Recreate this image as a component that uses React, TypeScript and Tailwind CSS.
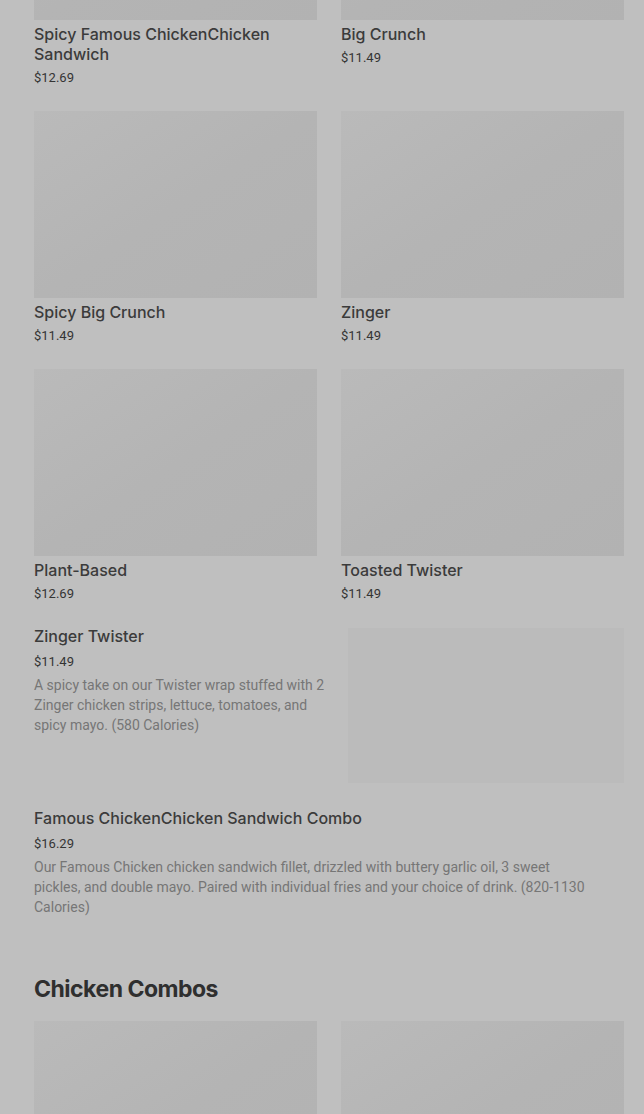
import React from "react";

type Item = { name: string; price: string };

const gridItems: Item[] = [
  { name: "Spicy Famous ChickenChicken Sandwich", price: "$12.69" },
  { name: "Big Crunch", price: "$11.49" },
  { name: "Spicy Big Crunch", price: "$11.49" },
  { name: "Zinger", price: "$11.49" },
  { name: "Plant-Based", price: "$12.69" },
  { name: "Toasted Twister", price: "$11.49" },
];

const listItems = [
  {
    name: "Zinger Twister",
    price: "$11.49",
    desc: "A spicy take on our Twister wrap stuffed with 2 Zinger chicken strips, lettuce, tomatoes, and spicy mayo.  (580 Calories)",
    image: true,
  },
  {
    name: "Famous ChickenChicken Sandwich Combo",
    price: "$16.29",
    desc: "Our Famous Chicken chicken sandwich fillet, drizzled with buttery garlic oil, 3 sweet pickles, and double mayo. Paired with individual fries and your choice of drink. (820-1130 Calories)",
    image: false,
  },
];

function GridCard({ item }: { item: Item }) {
  return (
    <div className="flex flex-col">
      <div className="h-[187px] w-full bg-linear-to-br from-[#bababa] via-[#b4b4b4] to-[#b2b2b2]" />
      <div className="mt-[4px] text-[16px] leading-[20px] font-medium text-[#3b3b3b]">{item.name}</div>
      <div className="mt-[5px] font-['Roboto',sans-serif] text-[13px] leading-[18px] text-[#343434]">{item.price}</div>
    </div>
  );
}

export default function App() {
  return (
    <div className="h-[1114px] overflow-hidden bg-[#bfbfbf] font-['Inter',sans-serif]">
      <div className="mt-[-167px] pl-[34px] pr-[20px]">
        <div className="grid grid-cols-2 gap-x-[24px] gap-y-[24px]">
          {gridItems.map((it) => (
            <GridCard key={it.name} item={it} />
          ))}
        </div>

        <div className="mt-[23px] flex flex-col gap-[25px]">
          {listItems.map((it) => (
            <div key={it.name} className="flex gap-[18px]">
              <div className="flex-1">
                <div className="text-[16px] leading-[20px] font-medium text-[#3b3b3b]">{it.name}</div>
                <div className="mt-[7px] font-['Roboto',sans-serif] text-[13px] leading-[18px] text-[#343434]">{it.price}</div>
                <div className="mt-[4px] max-w-[558px] font-['Roboto',sans-serif] text-[14px] leading-[20px] text-[#767676]">
                  {it.desc}
                </div>
              </div>
              {it.image && <div className="mt-[2px] h-[155px] w-[276px] shrink-0 bg-[#bbbbbb]" />}
            </div>
          ))}
        </div>

        <h2 className="mt-[56px] text-[23px] leading-[32px] font-bold tracking-[-0.5px] text-[#2f2f2f]">Chicken Combos</h2>

        <div className="mt-[16px] grid grid-cols-2 gap-x-[24px]">
          <div className="h-[187px] bg-linear-to-br from-[#bababa] via-[#b4b4b4] to-[#b2b2b2]" />
          <div className="h-[187px] bg-linear-to-br from-[#bababa] via-[#b4b4b4] to-[#b2b2b2]" />
        </div>
      </div>
    </div>
  );
}
